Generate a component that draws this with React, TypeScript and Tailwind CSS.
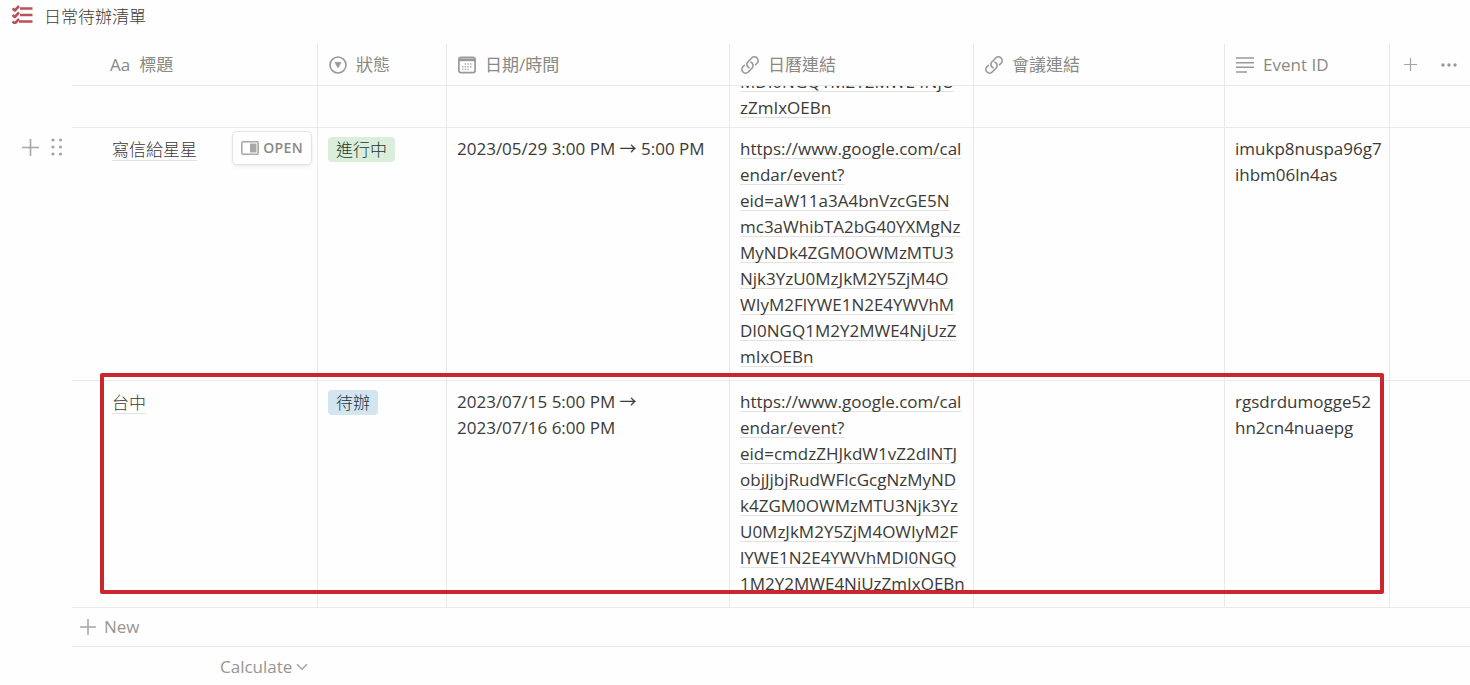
import type { ReactNode } from "react";

/* ─── Icons ─── */
const ChecklistIcon = () => (
  <svg viewBox="0 0 22 20" className="h-5 w-[22px] shrink-0" fill="none" stroke="#b8535a" strokeWidth="2.6" strokeLinejoin="round" aria-hidden="true">
    <path d="M0.500 4.500l2.300 2 4.200-4.500M0.500 11l2.300 2 4.200-4.500M0.500 17.500l2.300 2 4.200-4.500" />
    <path d="M8 4.500H20.500M8 11H20.500M7 17.500H20.500" strokeWidth="2.400" />
  </svg>
);

const SelectIcon = () => (
  <svg viewBox="0 0 18 18" className="mx-px h-[18px] w-[18px] shrink-0" aria-hidden="true">
    <circle cx="9" cy="9" r="8" fill="none" stroke="#999997" strokeWidth="1.6" />
    <path d="M5.800 6.300h6.400L9 12z" fill="#999997" stroke="#999997" strokeWidth="0.500" strokeLinejoin="round" />
  </svg>
);

const CalendarIcon = () => (
  <svg viewBox="0 0 18 18" className="mx-px h-[18px] w-[18px] shrink-0" aria-hidden="true">
    <rect x="0.900" y="1.400" width="16.200" height="15.200" rx="2.200" fill="none" stroke="#999997" strokeWidth="1.700" />
    <path d="M1 2.500h16v2.700H1z" fill="#999997" />
    <path d="M6.700 8h8M4 10.700h10.700M4 13.400h8" stroke="#aaaaa8" strokeWidth="1.400" strokeDasharray="1.400 1.300" />
  </svg>
);

const LinkIcon = () => (
  <svg viewBox="0 0 24 24" className="h-5 w-5 shrink-0" fill="none" stroke="#999997" strokeWidth="2" strokeLinecap="round" strokeLinejoin="round" aria-hidden="true">
    <path d="M13.190 8.688a4.500 4.500 0 0 1 1.242 7.244l-4.500 4.500a4.500 4.500 0 0 1-6.364-6.364l1.757-1.757m13.350-.622 1.757-1.757a4.500 4.500 0 0 0-6.364-6.364l-4.500 4.500a4.500 4.500 0 0 0 1.242 7.244" />
  </svg>
);

const TextIcon = () => (
  <svg viewBox="0 0 18 16" className="mx-px h-4 w-[18px] shrink-0" stroke="#999997" strokeWidth="1.400" aria-hidden="true">
    <path d="M0 1h18M0 5.700h18M0 10.300h18M0 15h11" />
  </svg>
);

const PlusIcon = ({ className = "h-4 w-4" }) => (
  <svg viewBox="0 0 16 16" className={className} stroke="#a5a5a3" strokeWidth="1.500" aria-hidden="true">
    <path d="M8 0v16M0 8h16" />
  </svg>
);

const DotsIcon = () => (
  <svg viewBox="0 0 16 4" className="h-1 w-4" fill="#999997" aria-hidden="true">
    <circle cx="2" cy="2" r="1.700" />
    <circle cx="8" cy="2" r="1.700" />
    <circle cx="14" cy="2" r="1.700" />
  </svg>
);

const GripIcon = () => (
  <svg viewBox="0 0 12 18" className="h-[18px] w-3" fill="#a5a5a3" aria-hidden="true">
    {[2, 9, 16].map((y) => (
      <g key={y}>
        <circle cx="2" cy={y} r="1.600" />
        <circle cx="9.500" cy={y} r="1.600" />
      </g>
    ))}
  </svg>
);

const PeekIcon = () => (
  <svg viewBox="0 0 18 14" className="h-3.5 w-[18px]" aria-hidden="true">
    <rect x="0.800" y="0.800" width="16.400" height="12.400" rx="1.500" fill="none" stroke="#a8a8a6" strokeWidth="1.600" />
    <path d="M9 2.500h6.500v9H9z" fill="#a8a8a6" />
  </svg>
);

const ChevronIcon = () => (
  <svg viewBox="0 0 12 8" className="h-2 w-3" fill="none" stroke="#a5a5a3" strokeWidth="1.500" aria-hidden="true">
    <path d="M1 1.200l5 5 5-5" />
  </svg>
);

/* ─── Data ─── */
interface Column {
  label: string;
  icon: ReactNode;
}

const columns: Column[] = [
  { label: "標題", icon: <span className="mr-px font-medium">Aa</span> },
  { label: "狀態", icon: <SelectIcon /> },
  { label: "日期/時間", icon: <CalendarIcon /> },
  { label: "日曆連結", icon: <LinkIcon /> },
  { label: "會議連結", icon: <LinkIcon /> },
  { label: "Event ID", icon: <TextIcon /> },
];

interface Task {
  title: string;
  status: string;
  statusColor: string;
  date: string[];
  link: string[];
  eventId: string[];
  hovered?: boolean;
  marked?: boolean;
}

const tasks: Task[] = [
  {
    title: "寫信給星星",
    status: "進行中",
    statusColor: "bg-[#dbeddb] text-[#1c3829]",
    date: ["2023/05/29 3:00 PM → 5:00 PM"],
    link: [
      "https://www.google.com/cal",
      "endar/event?",
      "eid=aW11a3A4bnVzcGE5N",
      "mc3aWhibTA2bG40YXMgNz",
      "MyNDk4ZGM0OWMzMTU3",
      "Njk3YzU0MzJkM2Y5ZjM4O",
      "WIyM2FlYWE1N2E4YWVhM",
      "DI0NGQ1M2Y2MWE4NjUzZ",
      "mIxOEBn",
    ],
    eventId: ["imukp8nuspa96g7", "ihbm06ln4as"],
    hovered: true,
  },
  {
    title: "台中",
    status: "待辦",
    statusColor: "bg-[#d3e5ef] text-[#183347]",
    date: ["2023/07/15 5:00 PM →", "2023/07/16 6:00 PM"],
    link: [
      "https://www.google.com/cal",
      "endar/event?",
      "eid=cmdzZHJkdW1vZ2dlNTJ",
      "objJjbjRudWFlcGcgNzMyND",
      "k4ZGM0OWMzMTU3Njk3Yz",
      "U0MzJkM2Y5ZjM4OWIyM2F",
      "lYWE1N2E4YWVhMDI0NGQ",
      "1M2Y2MWE4NjUzZmIxOEBn",
    ],
    eventId: ["rgsdrdumogge52", "hn2cn4nuaepg"],
    marked: true,
  },
];

/* ─── Cells ─── */
const Lines = ({ lines }: { lines: string[] }) => (
  <>
    {lines.map((line) => (
      <span key={line} className="block whitespace-nowrap">{line}</span>
    ))}
  </>
);

const UrlLink = ({ lines }: { lines: string[] }) => (
  <a href={`#${lines.length}`} className="block underline decoration-[#e2e2e0] decoration-1 underline-offset-3 [text-decoration-skip-ink:none]">
    <Lines lines={lines} />
  </a>
);

const cell = "border-b border-r border-[#e9e9e7] px-2.5 pt-2 pb-2.5 align-top";

const TaskRow = ({ task }: { task: Task }) => (
  <tr className="relative">
    <td className="p-0 pt-2.5 align-top">
      {task.hovered && (
        <div className="flex items-center gap-3 pl-[22px]">
          <button type="button" aria-label="Add row"><PlusIcon className="h-[17px] w-[17px]" /></button>
          <button type="button" aria-label="Drag row"><GripIcon /></button>
        </div>
      )}
      {task.marked && (
        <div className="pointer-events-none absolute -top-2 bottom-3.5 left-[100px] right-[86px] rounded-xs border-4 border-[#c9272d]" />
      )}
    </td>
    <td className={`${cell} pl-10`}>
      <div className="flex items-start justify-between">
        <span className="font-['Noto_Sans_CJK_TC',sans-serif] font-light underline decoration-[#e2e2e0] decoration-1 underline-offset-4">{task.title}</span>
        {task.hovered && (
          <button
            type="button"
            className="-mt-1 -mr-1 flex h-8 items-center gap-1 rounded-sm bg-white px-2 text-sm font-semibold tracking-wide text-[#8a8985] shadow-[0_0_0_1px_#e4e4e2,0_2px_4px_#0000001a]"
          >
            <PeekIcon />
            OPEN
          </button>
        )}
      </div>
    </td>
    <td className={cell}>
      <span className={`mt-px inline-flex h-[25px] items-center rounded px-2 font-light ${task.statusColor}`}>{task.status}</span>
    </td>
    <td className={cell}><Lines lines={task.date} /></td>
    <td className={cell}><UrlLink lines={task.link} /></td>
    <td className={cell} />
    <td className={cell}><Lines lines={task.eventId} /></td>
    <td className="border-b border-[#e9e9e7]" />
  </tr>
);

export default function App() {
  return (
    <main className="min-h-screen overflow-hidden bg-[#fefefe] font-['Open_Sans','Noto_Sans_CJK_TC',sans-serif] text-[17px] leading-[26px] text-[#3b3a37]">
      <h1 className="flex h-11 items-start gap-2.5 pt-1 pl-3 font-light">
        <ChecklistIcon />
        日常待辦清單
      </h1>

      <table className="w-full table-fixed border-separate border-spacing-0">
        <colgroup>
          <col className="w-[72px]" />
          <col className="w-[246px]" />
          <col className="w-[129px]" />
          <col className="w-[283px]" />
          <col className="w-[244px]" />
          <col className="w-[251px]" />
          <col className="w-[165px]" />
          <col />
        </colgroup>
        <thead className="text-[#8a8984]">
          <tr className="h-[42px]">
            <td />
            {columns.map(({ label, icon }, i) => (
              <th key={label} scope="col" className={`border-b border-r border-[#e9e9e7] pr-2.5 text-left font-normal ${i === 0 ? "pl-[38px]" : "pl-2.5"}`}>
                <div className="flex items-center gap-2">
                  {icon}
                  {label}
                </div>
              </th>
            ))}
            <th className="border-b border-[#e9e9e7] font-normal">
              <div className="flex items-center gap-6 pl-3.5">
                <button type="button" aria-label="Add property"><PlusIcon className="h-[13px] w-[13px]" /></button>
                <button type="button" aria-label="More options"><DotsIcon /></button>
              </div>
            </th>
          </tr>
        </thead>
        <tbody>
          {/* Row scrolled under the header: only its last lines are visible */}
          <tr>
            <td />
            <td className={cell} />
            <td className={cell} />
            <td className={cell} />
            <td className="border-b border-r border-[#e9e9e7] p-0 px-2.5">
              <div className="flex h-[41px] flex-col justify-end overflow-hidden pb-1.5">
                <UrlLink lines={["MDI0NGQ1M2Y2MWE4NjU", "zZmIxOEBn"]} />
              </div>
            </td>
            <td className={cell} />
            <td className={cell} />
            <td className="border-b border-[#e9e9e7]" />
          </tr>
          {tasks.map((task) => (
            <TaskRow key={task.title} task={task} />
          ))}
        </tbody>
      </table>

      <div className="ml-[72px] flex h-[39px] items-center border-b border-[#e9e9e7] pl-2">
        <button type="button" className="flex items-center gap-2 text-[#979692]">
          <PlusIcon />
          New
        </button>
      </div>
      <div className="flex h-10 items-center pl-[220px]">
        <button type="button" className="flex items-center gap-1 text-[#979692]">
          Calculate
          <ChevronIcon />
        </button>
      </div>
    </main>
  );
}
